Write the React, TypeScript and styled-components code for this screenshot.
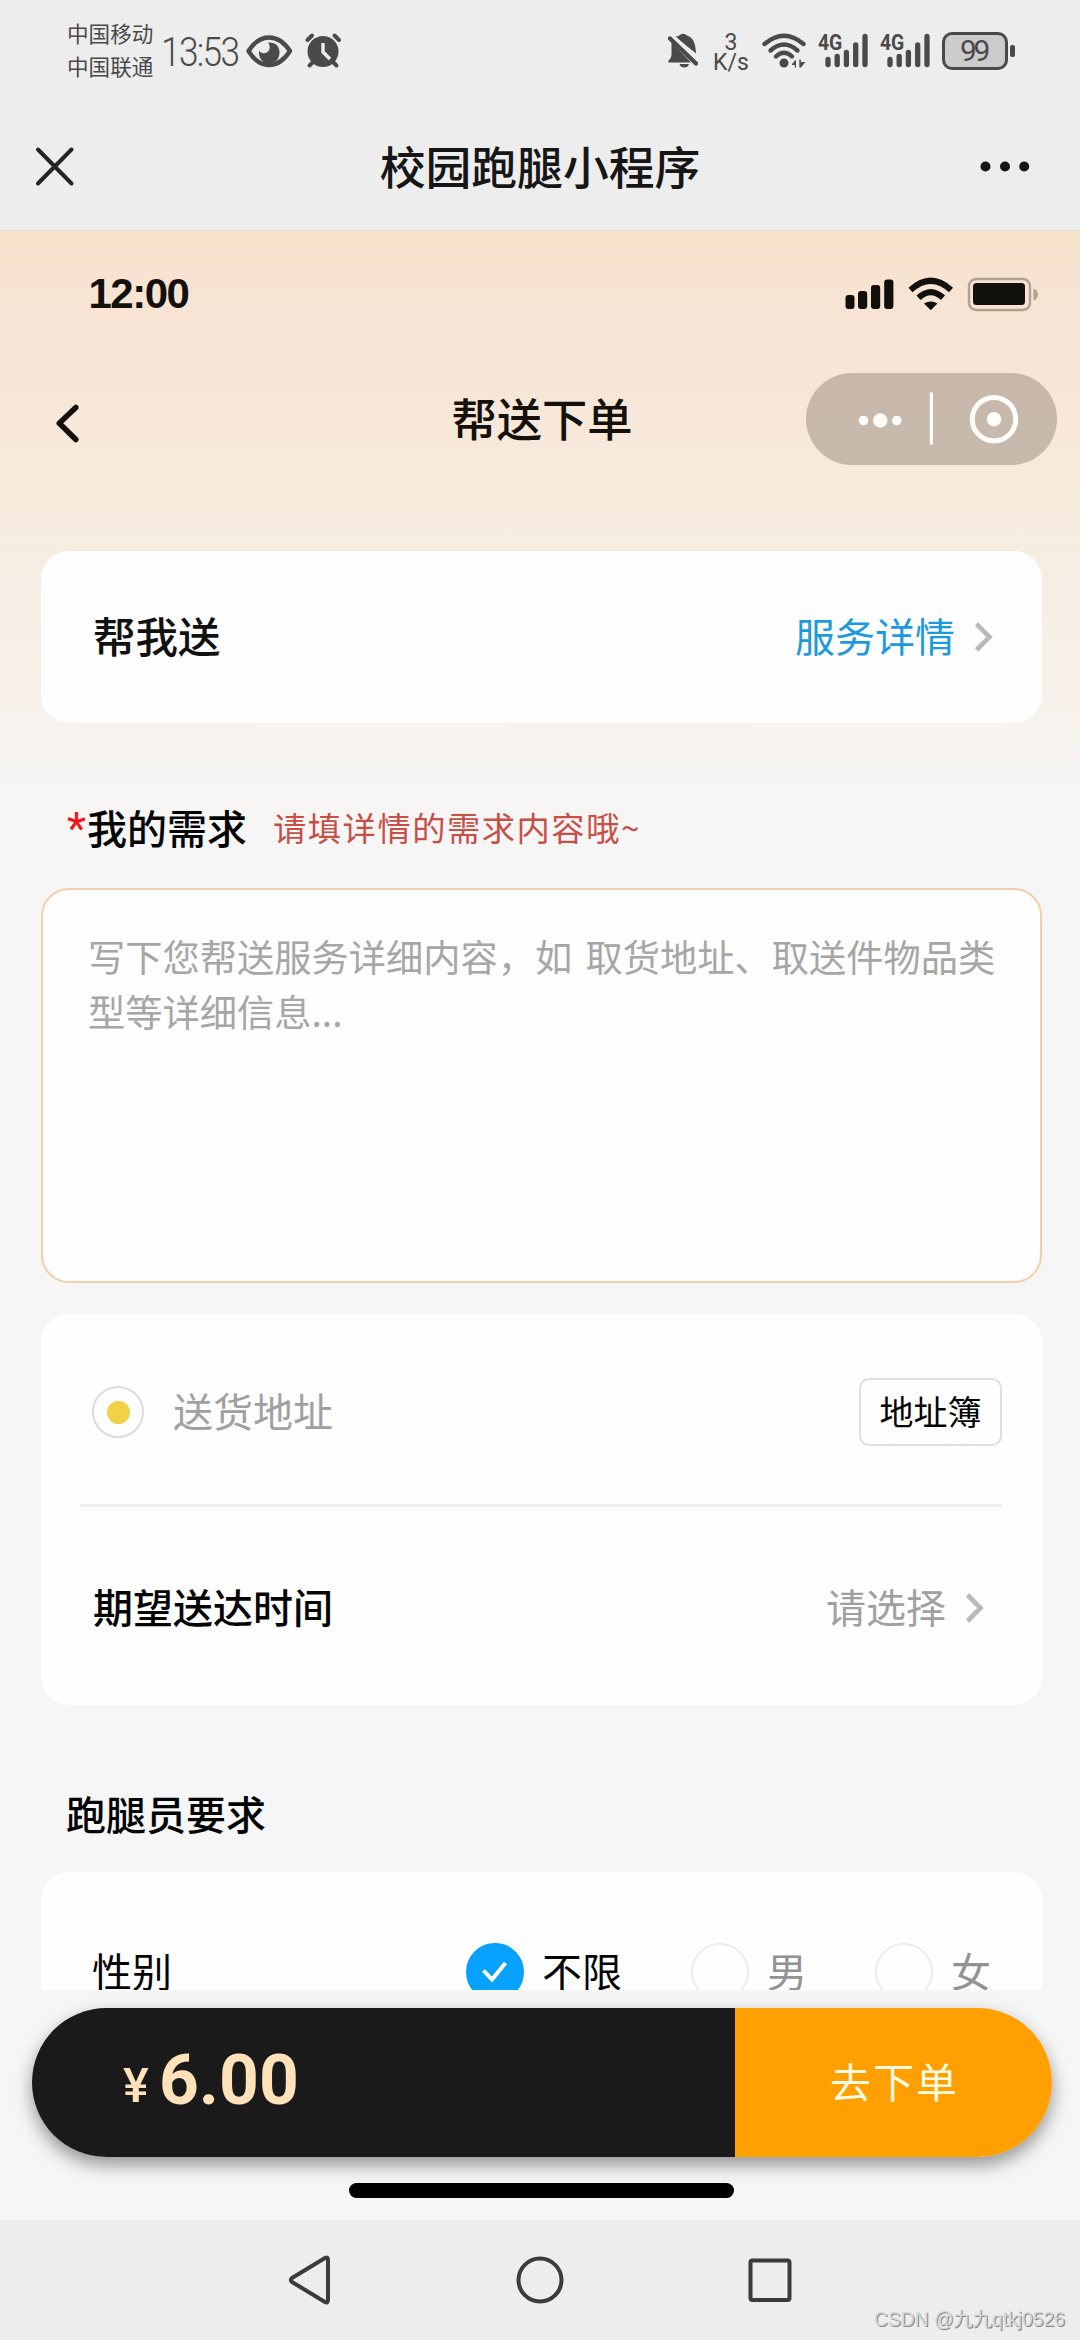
import React from 'react';
import styled, { createGlobalStyle } from 'styled-components';

const GlobalStyle = createGlobalStyle`
  * { box-sizing: border-box; }
  body {
    margin: 0;
    background: #f6f6f6;
    font-family: "Noto Sans CJK SC", "Noto Sans", sans-serif;
  }
  svg { display: block; flex: none; }
`;

const Screen = styled.div`
  width: 1080px;
  height: 2340px;
  display: flex;
  flex-direction: column;
  overflow: hidden;
  background: #ededed;
`;

/* ---------- system status bar ---------- */

const SystemBar = styled.header`
  height: 100px;
  flex: none;
  display: flex;
  align-items: flex-start;
  justify-content: space-between;
  padding: 0 65px 0 67px;
  color: #4a4a4a;
`;

const SystemGroup = styled.div`
  display: flex;
  align-items: flex-start;
`;

const Carriers = styled.div`
  width: 94px;
  padding-top: 16px;
  font-size: 21.6px;
  line-height: 33px;
  white-space: nowrap;
`;

const Clock = styled.span`
  width: 85px;
  padding-top: 29px;
  font-family: Roboto, sans-serif;
  font-weight: 300;
  font-size: 40.5px;
  line-height: 47px;
  letter-spacing: -1.9px;
  white-space: nowrap;
  transform: scaleX(0.87);
  transform-origin: left;
`;

const Speed = styled.div`
  width: 32px;
  margin: 33px 15px 0 17px;
  display: flex;
  flex-direction: column;
  align-items: center;
  font-family: Roboto, sans-serif;
  font-size: 23px;
  line-height: 19.5px;
`;

const Signal = styled.div`
  position: relative;
  width: 50px;
  margin-left: 12px;
`;

const SignalTag = styled.span`
  position: absolute;
  left: 0;
  top: 32px;
  font-family: Roboto, sans-serif;
  font-weight: 700;
  font-size: 22.5px;
  line-height: 20px;
  transform: scaleX(0.86);
  transform-origin: left;
`;

const Battery = styled.div`
  width: 66px;
  height: 38px;
  margin: 32px 2px 0 12px;
  border: 3px solid #4a4a4a;
  border-radius: 10px;
  background: #cccccc;
  display: flex;
  align-items: center;
  justify-content: center;
  font-family: Roboto, sans-serif;
  font-size: 30px;
  letter-spacing: -3.4px;
  padding-right: 3px;
  line-height: 32px;
`;

const BatteryNub = styled.div`
  width: 5px;
  height: 12px;
  margin-top: 45px;
  border-radius: 2px;
  background: #4a4a4a;
`;

/* ---------- host title bar ---------- */

const HostBar = styled.div`
  height: 130px;
  flex: none;
  display: grid;
  grid-template-columns: 120px 1fr 120px;
  align-items: center;
  padding: 0 50px 0 35px;
`;

const HostTitle = styled.h1`
  margin: 0;
  padding-left: 15px;
  text-align: center;
  font-size: 45.8px;
  font-weight: 500;
  line-height: 60px;
  color: #161616;
`;

const HostEnd = styled.div`
  display: flex;
  justify-content: flex-end;
`;

/* ---------- mini program page ---------- */

const Page = styled.main`
  height: 1990px;
  flex: none;
  display: flex;
  flex-direction: column;
  border-top: 1px solid #e3ddd5;
  background: linear-gradient(
      180deg,
      #f7e2c9 0px,
      #f8e3d2 40px,
      #f7e6d7 150px,
      #f7ebdd 270px,
      #f6eee3 340px,
      #f7f0e9 450px,
      #f7f5f3 540px,
      #f6f6f6 620px
    )
    #f6f6f6;
`;

const ScrollArea = styled.div`
  height: 1759px;
  flex: none;
  overflow: hidden;
  display: flex;
  flex-direction: column;
`;

const PhoneStatus = styled.div`
  height: 126px;
  flex: none;
  display: flex;
  align-items: center;
  justify-content: space-between;
  padding: 0 42px 0 88.5px;
  font-family: "Liberation Sans", Arial, sans-serif;
  font-weight: 700;
  font-size: 42px;
  letter-spacing: -1.5px;
  color: #14110c;
`;

const NavRow = styled.div`
  height: 123px;
  flex: none;
  display: grid;
  grid-template-columns: 251px 1fr 251px;
  align-items: center;
  padding: 0 23px 0 55px;
`;

const NavTitle = styled.h2`
  margin: 0;
  padding: 0 28px 4px 0;
  text-align: center;
  font-size: 45.3px;
  font-weight: 500;
  line-height: 60px;
  color: #14110c;
  white-space: nowrap;
`;

const Capsule = styled.div`
  height: 92px;
  border-radius: 46px;
  background: rgba(70, 60, 50, 0.27);
`;

const Card = styled.section<{ $top: number; $height: number }>`
  flex: none;
  margin: ${(p) => p.$top}px 38px 0 41px;
  height: ${(p) => p.$height}px;
  border-radius: 28px;
  background: #fefefe;
  padding: 0 40px 0 39px;
`;

const Row = styled.div<{ $height: number; $shift?: number; $end?: number }>`
  height: ${(p) => p.$height}px;
  padding-top: ${(p) => p.$shift ?? 0}px;
  padding-left: 13px;
  padding-right: ${(p) => p.$end ?? 0}px;
  display: flex;
  align-items: center;
  justify-content: space-between;
`;

const Inline = styled.div<{ $gap: number }>`
  display: flex;
  align-items: center;
  gap: ${(p) => p.$gap}px;
`;

const Text = styled.span<{ $size?: number; $color?: string; $medium?: boolean }>`
  padding-bottom: 4px;
  font-size: ${(p) => p.$size ?? 40}px;
  line-height: 56px;
  font-weight: ${(p) => (p.$medium ? 500 : 400)};
  color: ${(p) => p.$color ?? '#050505'};
  white-space: nowrap;
`;

const SectionLabel = styled.div<{ $height: number; $shift: number }>`
  flex: none;
  height: ${(p) => p.$height}px;
  padding: ${(p) => p.$shift}px 0 0 66px;
  display: flex;
  align-items: center;
`;

const Star = styled.span`
  width: 21px;
  padding-left: 1px;
  font-family: Roboto, sans-serif;
  font-size: 44px;
  line-height: 56px;
  color: #f01414;
`;

const Hint = styled(Text)`
  margin-left: 26px;
  letter-spacing: 1.5px;
`;

const RequestBox = styled.div`
  flex: none;
  height: 395px;
  margin: 0 38px 0 41px;
  padding: 39px 26px 0 45px;
  border: 2px solid #f2cfa9;
  border-radius: 28px;
  background: #fefefe;
  font-size: 37.25px;
  line-height: 55px;
  word-spacing: 5px;
  color: #a6a6a6;
`;

const Bullet = styled.span`
  width: 52px;
  height: 52px;
  margin-left: -1px;
  border: 2px solid #dcdcdc;
  border-radius: 50%;
  display: flex;
  align-items: center;
  justify-content: center;

  &::after {
    content: '';
    width: 23px;
    height: 23px;
    border-radius: 50%;
    background: #f3d147;
  }
`;

const BookButton = styled.button`
  width: 143px;
  height: 68px;
  padding: 0 0 3px;
  border: 2px solid #dedede;
  border-radius: 10px;
  background: #fefefe;
  font-family: inherit;
  font-size: 34px;
  line-height: 56px;
  color: #050505;
`;

const Divider = styled.div`
  height: 3px;
  background: #eeeeee;
`;

const GenderRow = styled.div`
  margin-top: 70px;
  padding-left: 12px;
  height: 58px;
  display: grid;
  grid-template-columns: 374px 225px 184px 130px;
  align-items: center;
`;

const Option = styled.label`
  display: flex;
  align-items: center;
  gap: 18px;
`;

const Radio = styled.span<{ $on?: boolean }>`
  width: 58px;
  height: 58px;
  flex: none;
  border-radius: 50%;
  border: 2px solid ${(p) => (p.$on ? '#07a1ff' : '#ececec')};
  background: ${(p) => (p.$on ? '#07a1ff' : '#fefefe')};
  display: flex;
  align-items: center;
  justify-content: center;
`;

const OrderBar = styled.div`
  flex: none;
  height: 149px;
  margin: 18px 28px 0 32px;
  border-radius: 75px;
  display: flex;
  overflow: hidden;
  box-shadow: 0 8px 18px rgba(0, 0, 0, 0.4);
`;

const Price = styled.div`
  width: 703px;
  background: #1a1a1a;
  padding-left: 91px;
  display: flex;
  align-items: baseline;
  font-family: Roboto, sans-serif;
  font-weight: 700;
  font-size: 69.5px;
  line-height: 146px;
  color: #ffe2ba;
`;

const Currency = styled.span`
  width: 36px;
  font-size: 48.5px;
  font-weight: 500;
  position: relative;
  top: -2px;
`;

const OrderButton = styled.button`
  flex: 1;
  border: 0;
  padding: 0 0 5px 2px;
  background: #ffa000;
  font-family: inherit;
  font-size: 41px;
  letter-spacing: 2px;
  color: #fffbe0;
`;

const HomeIndicator = styled.div`
  flex: none;
  width: 385px;
  height: 15px;
  margin: 26px 0 0 349px;
  border-radius: 8px;
  background: #000;
`;

/* ---------- system navigation ---------- */

const SystemNav = styled.nav`
  position: relative;
  height: 120px;
  flex: none;
  display: flex;
  justify-content: center;
  align-items: center;
  gap: 182px;
  background: #ededed;
`;

const Watermark = styled.span`
  position: absolute;
  right: 15px;
  bottom: 6px;
  font-family: "Liberation Sans", "Noto Sans CJK SC", sans-serif;
  font-size: 19.3px;
  line-height: 28px;
  color: #d6d6d6;
  text-shadow: 1px 1px 0 #858585;
  white-space: nowrap;
`;

const Chevron = () => (
  <svg width="20" height="32" viewBox="0 0 20 32" fill="none">
    <path d="M2.5 3 L15.5 16 L2.5 29" stroke="#b9b9b9" strokeWidth="4.6" />
  </svg>
);

const EyeIcon = () => (
  <svg width="58" height="100" viewBox="246 0 58 100">
    <path
      d="M248.5 51 Q257 37.5 269 37.5 Q281 37.5 290 51 Q281 65 269 65 Q257 65 248.5 51 Z"
      fill="none"
      stroke="#4a4a4a"
      strokeWidth="4.4"
      strokeLinejoin="round"
    />
    <path
      d="M268 42.5 C277 42 280 48 279.500 53.500 C279 60 274 63.500 269 63.500 C262 63.500 258.500 58 259 50.500 C261 54 266 54 268.500 51 C270.500 48 270 45 268 42.500 Z"
      fill="#4a4a4a"
    />
  </svg>
);

const AlarmIcon = () => (
  <svg width="38" height="100" viewBox="303 0 38 100">
    <circle cx="322" cy="51.500" r="15.500" fill="#4a4a4a" />
    <g stroke="#4a4a4a" strokeWidth="4" strokeLinecap="round">
      <path d="M306.500 40 L311 35.500 M333.500 35.500 L338 40 M312 62 L308.500 65.500 M332 62 L335.500 65.500" />
    </g>
    <path d="M322 43 V52 L329 59" fill="none" stroke="#ededed" strokeWidth="3.400" />
  </svg>
);

const MutedBellIcon = () => (
  <svg width="30" height="100" viewBox="668 0 30 100" fill="#4a4a4a">
    <path d="M675 36.500 Q679 36.500 680.500 34.500 Q684 32.500 687 35.500 C694 38 695.500 44 696 53.500 Z" />
    <path d="M671.500 42 L691 62.500 H668.500 V60.500 Q671.500 58 671.500 54 Z" />
    <path d="M679.500 64 H689 Q688 67.500 684.300 67.500 Q680.500 67.500 679.500 64 Z" />
    <path d="M670 38.500 L696 63.500" stroke="#4a4a4a" strokeWidth="4.400" strokeLinecap="round" />
    <path d="M674 36.300 L697 58.500" stroke="#ededed" strokeWidth="2.400" />
  </svg>
);

const SystemWifiIcon = () => (
  <svg width="44" height="100" viewBox="762 0 44 100">
    <g fill="none" stroke="#4a4a4a" strokeWidth="4.400" strokeLinecap="round">
      <path d="M764.500 44 Q784 27.500 803.500 44" />
      <path d="M770.500 50.500 Q784 38.500 797.500 50.500" />
      <path d="M776 56.500 Q784 49 792 56.500" />
    </g>
    <circle cx="784" cy="63" r="4.500" fill="#4a4a4a" />
    <path d="M792 64 L796 59.500 V67.500 H794.800 V65 H792 Z M799.300 59.500 H800.800 V62 H805.500 L801 67.500 H799.300 Z" fill="#4a4a4a" />
  </svg>
);

const SignalIndicator = () => (
  <Signal>
    <SignalTag>4G</SignalTag>
    <svg width="50" height="100" viewBox="0 0 50 100">
      <path
        d="M10 59.500 V64.500 M19.200 56.500 V64.500 M28.400 52.500 V64.500 M37.700 44.800 V64.500 M47 36.500 V64.500"
        stroke="#4a4a4a"
        strokeWidth="5.300"
        strokeLinecap="round"
      />
    </svg>
  </Signal>
);

const CloseIcon = () => (
  <svg width="40" height="130" viewBox="35 100 40 130">
    <path d="M38 149.500 L71.500 183.500 M71.500 149.500 L38 183.500" stroke="#242424" strokeWidth="4" strokeLinecap="round" />
  </svg>
);

const MoreIcon = () => (
  <svg width="52" height="130" viewBox="978 100 52 130" fill="#161616">
    <circle cx="985.500" cy="166.500" r="5" />
    <circle cx="1005" cy="166.500" r="5" />
    <circle cx="1024.200" cy="166.500" r="5" />
  </svg>
);

const PhoneStatusIcons = () => (
  <svg width="194" height="40" viewBox="844 274 194 40">
    <g fill="#12100c">
      <rect x="845.500" y="295" width="9" height="14" rx="3" />
      <rect x="858" y="291" width="9.200" height="18" rx="3" />
      <rect x="871" y="285" width="9.200" height="24" rx="3" />
      <rect x="884.200" y="279.500" width="9.200" height="29.500" rx="3" />
      <path d="M924 303.500 Q930.500 299.500 937.500 303.500 L930.800 310.300 Z" />
    </g>
    <g fill="none" stroke="#12100c" strokeWidth="6">
      <path d="M910.500 290 Q930.800 271.500 951 290" />
      <path d="M918.500 297.800 Q930.800 286.500 943 297.800" />
    </g>
    <rect x="969" y="279" width="61" height="31" rx="7" fill="none" stroke="#b3a18f" strokeWidth="2.400" />
    <rect x="973" y="283" width="52" height="22" rx="3.500" fill="#12100c" />
    <path d="M1033.500 288.500 Q1037.800 290 1037.800 294.500 Q1037.800 299 1033.500 300.500 Z" fill="#b3a18f" />
  </svg>
);

const BackIcon = () => (
  <svg width="26" height="123" viewBox="55 357 26 123">
    <path d="M75.800 407.500 L59.300 423.300 L75.800 439.500" fill="none" stroke="#14110c" strokeWidth="5.500" strokeLinecap="round" strokeLinejoin="round" />
  </svg>
);

const CapsuleIcons = () => (
  <svg width="251" height="92" viewBox="806 372.500 251 92" fill="#fffefa">
    <circle cx="863.500" cy="420" r="4.800" />
    <circle cx="880.300" cy="420" r="7.200" />
    <circle cx="896.800" cy="420" r="4.800" />
    <rect x="929.800" y="392" width="3.200" height="52" />
    <circle cx="994" cy="418.700" r="21.700" fill="none" stroke="#fffefa" strokeWidth="5" />
    <circle cx="994" cy="418.700" r="7.200" />
  </svg>
);

const CheckIcon = () => (
  <svg width="28" height="22" viewBox="0 0 28 22" fill="none">
    <path d="M2.500 9.500 L11 18.500 L24.500 2" stroke="#ffffff" strokeWidth="4" />
  </svg>
);

const navStroke = { fill: 'none', stroke: '#3b3b3b', strokeWidth: 4, strokeLinejoin: 'round' as const };

export default function App() {
  return (
    <>
      <GlobalStyle />
      <Screen>
        <SystemBar>
          <SystemGroup>
            <Carriers>
              <div>中国移动</div>
              <div>中国联通</div>
            </Carriers>
            <Clock>13:53</Clock>
            <EyeIcon />
            <AlarmIcon />
          </SystemGroup>
          <SystemGroup>
            <MutedBellIcon />
            <Speed>
              <span>3</span>
              <span>K/s</span>
            </Speed>
            <SystemWifiIcon />
            <SignalIndicator />
            <SignalIndicator />
            <Battery>99</Battery>
            <BatteryNub />
          </SystemGroup>
        </SystemBar>

        <HostBar>
          <CloseIcon />
          <HostTitle>校园跑腿小程序</HostTitle>
          <HostEnd>
            <MoreIcon />
          </HostEnd>
        </HostBar>

        <Page>
          <ScrollArea>
            <PhoneStatus>
              <span>12:00</span>
              <PhoneStatusIcons />
            </PhoneStatus>
            <NavRow>
              <BackIcon />
              <NavTitle>帮送下单</NavTitle>
              <Capsule>
                <CapsuleIcons />
              </Capsule>
            </NavRow>

            <Card $top={71} $height={172}>
              <Row $height={172} $end={8}>
                <Text $size={42.5} $medium $color="#111111">帮我送</Text>
                <Inline $gap={19}>
                  <Text $color="#1c9ade">服务详情</Text>
                  <Chevron />
                </Inline>
              </Row>
            </Card>

            <SectionLabel $height={165} $shift={46}>
              <Star>*</Star>
              <Text $medium>我的需求</Text>
              <Hint $size={33.3} $color="#c84f47">请填详情的需求内容哦~</Hint>
            </SectionLabel>
            <RequestBox>写下您帮送服务详细内容，如 取货地址、取送件物品类型等详细信息...</RequestBox>

            <Card $top={31} $height={391}>
              <Row $height={190} $shift={6}>
                <Inline $gap={29}>
                  <Bullet />
                  <Text $color="#a0a0a0">送货地址</Text>
                </Inline>
                <BookButton>地址簿</BookButton>
              </Row>
              <Divider />
              <Row $height={198} $shift={3} $end={17}>
                <Text $medium>期望送达时间</Text>
                <Inline $gap={19}>
                  <Text $color="#a0a0a0">请选择</Text>
                  <Chevron />
                </Inline>
              </Row>
            </Card>

            <SectionLabel $height={167} $shift={52}>
              <Text $medium>跑腿员要求</Text>
            </SectionLabel>
            <Card $top={0} $height={240}>
              <GenderRow>
                <Text>性别</Text>
                <Option>
                  <Radio $on>
                    <CheckIcon />
                  </Radio>
                  <Text>不限</Text>
                </Option>
                <Option>
                  <Radio />
                  <Text $color="#929292">男</Text>
                </Option>
                <Option>
                  <Radio />
                  <Text $color="#929292">女</Text>
                </Option>
              </GenderRow>
            </Card>
          </ScrollArea>

          <OrderBar>
            <Price>
              <Currency>¥</Currency>6.00
            </Price>
            <OrderButton>去下单</OrderButton>
          </OrderBar>
          <HomeIndicator />
        </Page>

        <SystemNav>
          <svg width="48" height="52" viewBox="285 2254 48 52">
            <path d="M291 2278 Q289 2280 291 2282 L324 2302 Q327 2303.500 327 2300 V2260 Q327 2256.500 324 2258 Z" {...navStroke} />
          </svg>
          <svg width="48" height="48" viewBox="0 0 48 48">
            <circle cx="24" cy="24" r="21.500" {...navStroke} />
          </svg>
          <svg width="48" height="48" viewBox="745 2256 48 48">
            <rect x="749.500" y="2260.500" width="39" height="39.500" rx="2" {...navStroke} />
          </svg>
          <Watermark>CSDN @九九qtkj0526</Watermark>
        </SystemNav>
      </Screen>
    </>
  );
}
